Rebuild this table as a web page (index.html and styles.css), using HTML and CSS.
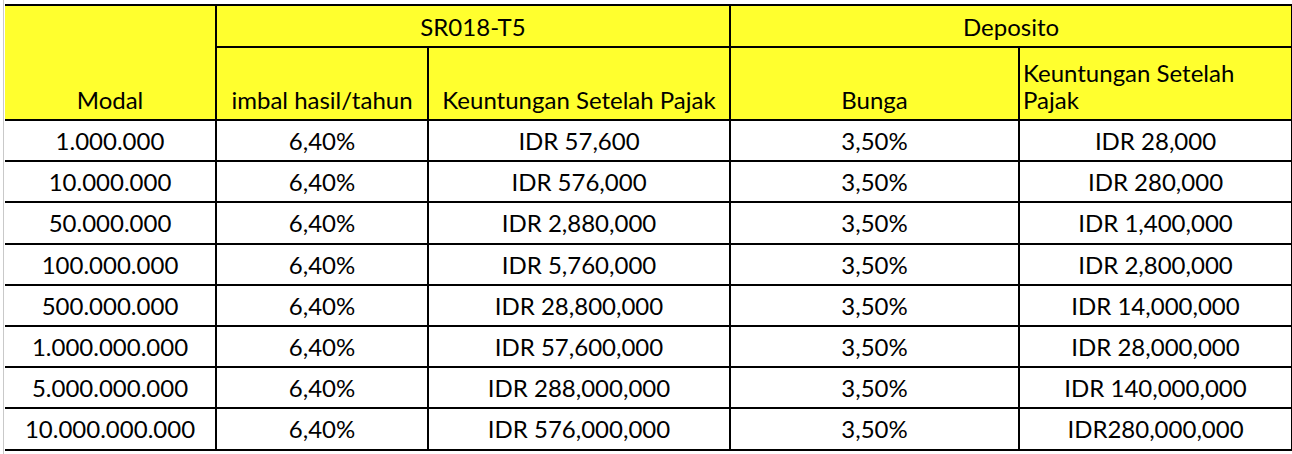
FILE: index.html
```html
<!DOCTYPE html>
<html lang="id">
<head>
<meta charset="utf-8">
<title>SR018-T5 vs Deposito</title>
<link rel="stylesheet" href="styles.css">
</head>
<body>
<div class="sheet">
  <table class="grid">
    <colgroup>
      <col class="c-modal">
      <col class="c-imbal">
      <col class="c-untung">
      <col class="c-bunga">
      <col class="c-dep">
    </colgroup>
    <thead>
      <tr class="head-top">
        <th class="modal" rowspan="2">Modal</th>
        <th colspan="2">SR018-T5</th>
        <th colspan="2">Deposito</th>
      </tr>
      <tr class="head-sub">
        <th>imbal hasil/tahun</th>
        <th>Keuntungan Setelah Pajak</th>
        <th>Bunga</th>
        <th class="wrap">Keuntungan Setelah Pajak</th>
      </tr>
    </thead>
    <tbody>
      <tr><td>1.000.000</td><td>6,40%</td><td>IDR 57,600</td><td>3,50%</td><td>IDR 28,000</td></tr>
      <tr><td>10.000.000</td><td>6,40%</td><td>IDR 576,000</td><td>3,50%</td><td>IDR 280,000</td></tr>
      <tr><td>50.000.000</td><td>6,40%</td><td>IDR 2,880,000</td><td>3,50%</td><td>IDR 1,400,000</td></tr>
      <tr><td>100.000.000</td><td>6,40%</td><td>IDR 5,760,000</td><td>3,50%</td><td>IDR 2,800,000</td></tr>
      <tr><td>500.000.000</td><td>6,40%</td><td>IDR 28,800,000</td><td>3,50%</td><td>IDR 14,000,000</td></tr>
      <tr><td>1.000.000.000</td><td>6,40%</td><td>IDR 57,600,000</td><td>3,50%</td><td>IDR 28,000,000</td></tr>
      <tr><td>5.000.000.000</td><td>6,40%</td><td>IDR 288,000,000</td><td>3,50%</td><td>IDR 140,000,000</td></tr>
      <tr><td>10.000.000.000</td><td>6,40%</td><td>IDR 576,000,000</td><td>3,50%</td><td>IDR280,000,000</td></tr>
    </tbody>
  </table>
</div>
</body>
</html>
```

FILE: styles.css
```css
html, body {
  margin: 0;
  padding: 0;
  background: #ffffff;
}

body {
  font-family: Lato, "Open Sans", "Liberation Sans", sans-serif;
  color: #000000;
}

.sheet {
  margin-left: 3px;
  padding-left: 1px;
  padding-top: 4px;
  border-left: 1px solid #c9c9c9;
  height: 450px;
}

.grid {
  border-collapse: collapse;
  table-layout: fixed;
  width: 1287px;
  font-size: 24px;
  line-height: 27px;
}

.c-modal { width: 211px; }
.c-imbal { width: 212px; }
.c-untung { width: 302px; }
.c-bunga { width: 289px; }
.c-dep { width: 273px; }

.grid th,
.grid td {
  border: 2px solid #000000;
  padding: 0 4px;
  text-align: center;
  white-space: nowrap;
  overflow: hidden;
}

.grid th {
  font-weight: normal;
  background: #ffff2e;
}

.grid tr > :first-child {
  border-left: none;
}

.head-top {
  height: 42px;
}

.head-top th {
  vertical-align: middle;
  padding-top: 1px;
}

.grid th.modal {
  vertical-align: bottom;
  padding-bottom: 6px;
}

.head-sub {
  height: 73px;
}

.head-sub th {
  vertical-align: bottom;
  padding-bottom: 6px;
}

.head-sub th.wrap {
  white-space: normal;
  text-align: left;
  padding-left: 3px;
  padding-right: 30px;
}

.grid tbody tr {
  height: 41.2px;
}

.grid td {
  vertical-align: middle;
  padding-top: 0;
}
```
